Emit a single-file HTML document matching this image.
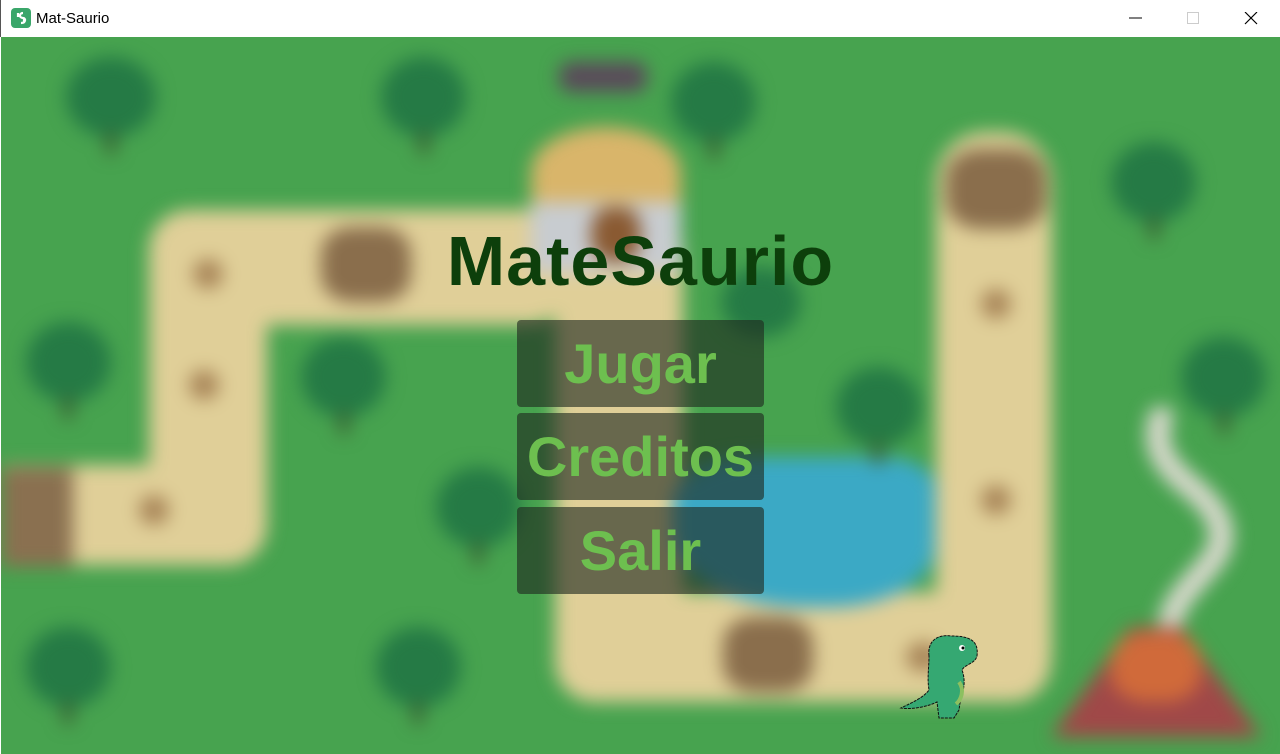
<!DOCTYPE html>
<html><head><meta charset="utf-8"><style>
*{margin:0;padding:0;box-sizing:border-box}
body{width:1280px;height:754px;overflow:hidden;background:#fff;font-family:"Liberation Sans",sans-serif;position:relative}
#bar{position:absolute;left:0;top:0;width:1280px;height:37px;background:#fff;border-left:1px solid #555}
#bar .t{position:absolute;left:35px;top:10px;font-size:15px;color:#000}
#game{position:absolute;left:1px;top:37px;width:1279px;height:717px;background:#47a34f;overflow:hidden}
#bg{position:absolute;inset:0;filter:blur(9px)}
.p{position:absolute;background:#e0cf98}
.tr{position:absolute;border-radius:50%;background:#257a45}
.tk{position:absolute;width:10px;height:22px;background:#3a5a30}
.st{position:absolute;border-radius:50%;background:#a88558}
.rk{position:absolute;border-radius:35%;background:#8a6e4c}
.btn{position:absolute;left:516px;width:247px;height:87px;background:rgba(30,40,30,.62);border-radius:4px;color:#6dbf4f;font-weight:bold;font-size:56px;text-align:center;line-height:87px}
#title{position:absolute;left:0;width:1279px;top:184px;text-align:center;font-size:70px;font-weight:bold;color:#0d3f0b;letter-spacing:1px}
</style></head><body>
<div id="bar">
<svg style="position:absolute;left:10px;top:8px" width="20" height="20"><rect width="20" height="20" rx="4" fill="#3aa66a"/><path d="M7 5 v4 M13 11 v4 M12 5 c-4 0 -4 5 0 5 c3 0 3 5 -2 5" stroke="#fff" stroke-width="2.2" fill="none"/></svg>
<div class="t">Mat-Saurio</div>
<svg style="position:absolute;left:1126px;top:12px" width="140" height="14"><line x1="2" y1="6" x2="15" y2="6" stroke="#000"/><rect x="60.5" y="0.5" width="11" height="11" fill="none" stroke="#ccc"/><path d="M118 0 L130 12 M130 0 L118 12" stroke="#000" stroke-width="1.2"/></svg>
</div>
<div id="game">
<div id="bg">
<div class="p" style="left:0;top:428px;width:265px;height:100px;border-radius:0 40px 40px 0"></div>
<div class="p" style="left:148px;top:175px;width:118px;height:353px;border-radius:40px"></div>
<div class="p" style="left:148px;top:173px;width:420px;height:115px;border-radius:40px"></div>
<div class="p" style="left:554px;top:175px;width:128px;height:490px;border-radius:40px"></div>
<div class="p" style="left:554px;top:555px;width:496px;height:110px;border-radius:40px"></div>
<div class="p" style="left:935px;top:95px;width:116px;height:570px;border-radius:50px"></div>
<div style="position:absolute;left:672px;top:420px;width:262px;height:150px;background:#3ba9c5;border-radius:30% 20% 40% 50%"></div>
<div style="position:absolute;left:0;top:430px;width:72px;height:100px;background:#8a7050"></div>
<div style="position:absolute;left:530px;top:90px;width:150px;height:90px;background:#d9b56a;border-radius:50% 50% 10% 10%"></div>
<div style="position:absolute;left:530px;top:165px;width:150px;height:70px;background:#c8ccd0"></div>
<div style="position:absolute;left:590px;top:170px;width:50px;height:55px;background:#8a5a32;border-radius:40%"></div>
<div style="position:absolute;left:558px;top:25px;width:88px;height:30px;background:#5a4a5a;border-radius:12px"></div>
<div class="rk" style="left:320px;top:190px;width:90px;height:75px"></div>
<div class="rk" style="left:945px;top:112px;width:100px;height:80px"></div>
<div class="rk" style="left:722px;top:580px;width:90px;height:75px"></div>
<div class="st" style="left:192px;top:222px;width:30px;height:30px"></div>
<div class="st" style="left:188px;top:333px;width:30px;height:30px"></div>
<div class="st" style="left:138px;top:458px;width:30px;height:30px"></div>
<div class="st" style="left:980px;top:252px;width:30px;height:30px"></div>
<div class="st" style="left:980px;top:448px;width:30px;height:30px"></div>
<div class="st" style="left:905px;top:605px;width:35px;height:30px"></div>
<div class="tr" style="left:65px;top:20px;width:90px;height:80px"></div><div class="tk" style="left:105px;top:95px"></div>
<div class="tr" style="left:380px;top:20px;width:85px;height:80px"></div><div class="tk" style="left:418px;top:95px"></div>
<div class="tr" style="left:670px;top:25px;width:85px;height:80px"></div><div class="tk" style="left:708px;top:100px"></div>
<div class="tr" style="left:1110px;top:105px;width:85px;height:80px"></div><div class="tk" style="left:1148px;top:180px"></div>
<div class="tr" style="left:25px;top:285px;width:85px;height:80px"></div><div class="tk" style="left:62px;top:360px"></div>
<div class="tr" style="left:300px;top:300px;width:85px;height:80px"></div><div class="tk" style="left:338px;top:375px"></div>
<div class="tr" style="left:835px;top:330px;width:85px;height:80px"></div><div class="tk" style="left:872px;top:405px"></div>
<div class="tr" style="left:1180px;top:300px;width:85px;height:80px"></div><div class="tk" style="left:1218px;top:375px"></div>
<div class="tr" style="left:435px;top:430px;width:85px;height:80px"></div><div class="tk" style="left:472px;top:505px"></div>
<div class="tr" style="left:25px;top:590px;width:85px;height:80px"></div><div class="tk" style="left:62px;top:665px"></div>
<div class="tr" style="left:375px;top:590px;width:85px;height:80px"></div><div class="tk" style="left:412px;top:665px"></div>
<div class="tr" style="left:720px;top:230px;width:80px;height:70px"></div>
<svg style="position:absolute;left:1120px;top:370px" width="140" height="230"><path d="M40 10 C30 40 45 60 70 80 C100 105 110 130 90 155 C70 180 45 200 50 225" stroke="#d8d8cc" stroke-width="24" fill="none" stroke-linecap="round"/></svg>
<div style="position:absolute;left:1050px;top:590px;width:210px;height:110px;background:#a04848;clip-path:polygon(38% 0,62% 0,100% 100%,0 100%)"></div>
<div style="position:absolute;left:1110px;top:595px;width:90px;height:70px;background:#d06a3a;border-radius:40%"></div>
</div>
<svg style="position:absolute;left:898px;top:595px" width="85" height="95" viewBox="0 0 85 95"><path d="M30 24 C28 8 40 2 52 4 C70 4 80 8 78 24 C76 32 66 32 63 38 C66 46 66 56 62 64 L60 78 L55 86 L40 86 L38 70 C30 74 14 78 2 76 C14 70 24 66 30 58 C28 46 30 36 30 24 Z" fill="#35a872" stroke="#111" stroke-width="1" stroke-dasharray="3 1"/><circle cx="63" cy="16" r="3" fill="#fff"/><circle cx="64" cy="16" r="1.5" fill="#000"/><path d="M60 50 C66 58 62 68 57 72" stroke="#8cc060" stroke-width="4" fill="none"/></svg>
<div id="title">MateSaurio</div>
<div class="btn" style="top:283px">Jugar</div>
<div class="btn" style="top:376px">Creditos</div>
<div class="btn" style="top:470px">Salir</div>
</div>
</body></html>
